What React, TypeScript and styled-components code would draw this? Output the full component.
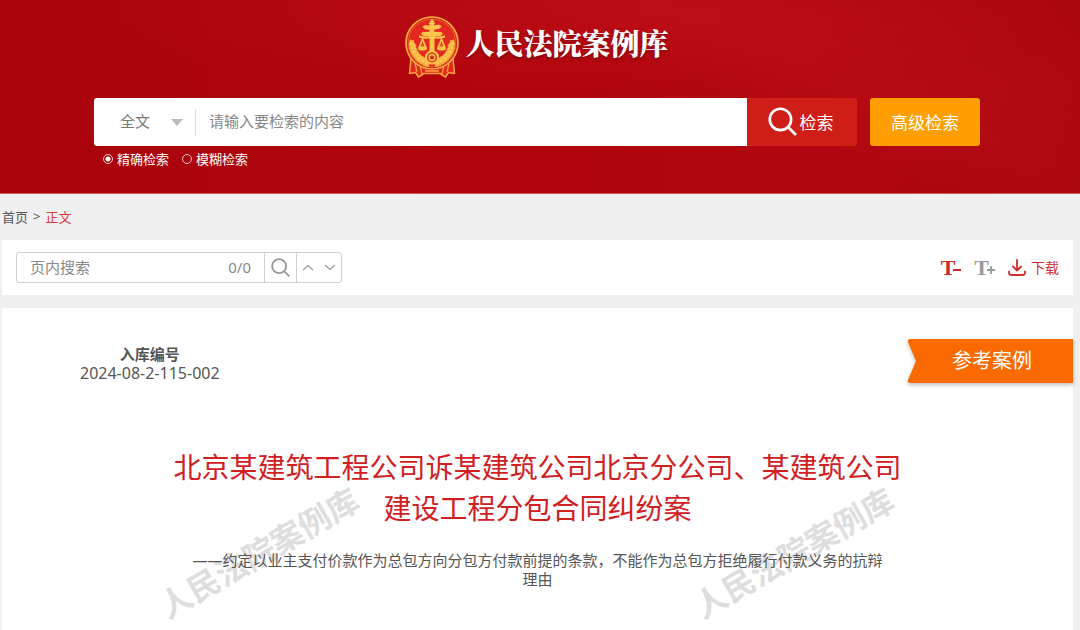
import React, { useState } from "react";
import styled, { createGlobalStyle } from "styled-components";

const sans = `"Noto Sans", "Noto Sans CJK SC", sans-serif`;

const GlobalStyle = createGlobalStyle`
  * { box-sizing: border-box; }
  body {
    margin: 0;
    background: #f0f0f0;
    font-family: ${sans};
    color: #555;
  }
  button, input, select { font-family: inherit; margin: 0; }
  h1, h2, p, dl, dd { margin: 0; font-weight: 400; }
`;

const Page = styled.div`
  min-height: 100vh;
  display: flex;
  flex-direction: column;
`;

const Header = styled.header`
  display: flex;
  flex-direction: column;
  align-items: center;
  height: 194px;
  padding: 16px 6px 0 0;
  border-bottom: 1px solid #d0575c;
  background:
    linear-gradient(24deg, transparent 62%, rgba(255, 60, 60, 0.05) 72%, transparent 90%),
    radial-gradient(ellipse 46% 40% at 54% 6%, rgba(200, 22, 32, 0.4), transparent),
    radial-gradient(ellipse 36% 60% at 90% 40%, rgba(195, 20, 30, 0.25), transparent),
    linear-gradient(90deg, #a9040c, #b1040d 40%, #b1060f 75%, #a8050d);
`;

const Brand = styled.a`
  display: flex;
  align-items: center;
  gap: 6px;
  height: 62px;
  color: #fff;
  text-decoration: none;
`;

const BrandName = styled.span`
  padding-bottom: 8px;
  font: 900 29px/40px "Noto Serif CJK SC", "Noto Sans CJK SC", serif;
  text-shadow: 0 2px 3px rgba(80, 0, 0, 0.5);
`;

const SearchForm = styled.form`
  width: 82.5%;
  margin-top: 20px;
`;

const SearchRow = styled.div`
  display: flex;
  height: 48px;
`;

const SearchBox = styled.div`
  flex: 1;
  min-width: 0;
  display: flex;
  align-items: center;
  background: #fff;
  border-radius: 3px 0 0 3px;
`;

const ScopeField = styled.div`
  display: flex;
  align-items: center;
  width: 102px;
  height: 27px;
  border-right: 1px solid #ddd;
`;

const ScopeSelect = styled.select`
  appearance: none;
  width: 90px;
  height: 27px;
  padding: 0 0 2px 26px;
  border: 0;
  outline: 0;
  color: #777;
  font-size: 15px;
  background: none;
`;

const ScopeArrow = styled.svg`
  flex: none;
  margin-left: -13px;
  pointer-events: none;
`;

const SearchInput = styled.input`
  flex: 1;
  min-width: 0;
  height: 40px;
  padding: 0 13px 2px;
  border: 0;
  outline: 0;
  background: none;
  color: #555;
  font-size: 15px;
  &::placeholder { color: #888; opacity: 1; }
`;

const ActionButton = styled.button<{ $tone: "red" | "orange" }>`
  display: flex;
  align-items: center;
  justify-content: center;
  gap: 3px;
  width: 110px;
  padding: 0 3px 2px 0;
  border: 0;
  color: #fff;
  font-size: 17px;
  cursor: pointer;
  background: ${(p) => (p.$tone === "red" ? "#cf1d17" : "#ff9e00")};
  border-radius: ${(p) => (p.$tone === "red" ? "0 3px 3px 0" : "3px")};
`;

const AdvancedButton = styled(ActionButton)`
  margin-left: 13px;
  padding-right: 0;
`;

const Modes = styled.div`
  display: flex;
  gap: 13px;
  padding: 4px 0 0 9px;
`;

const ModeLabel = styled.label`
  display: flex;
  align-items: center;
  gap: 4px;
  color: #fff;
  font-size: 13px;
  line-height: 18px;
`;

const ModeRadio = styled.input`
  appearance: none;
  width: 10px;
  height: 10px;
  border: 1px solid #f3c9cb;
  border-radius: 50%;
  &:checked { background: radial-gradient(circle, #fff 2px, transparent 3px); }
`;

const Breadcrumb = styled.nav`
  display: flex;
  align-items: center;
  gap: 5px;
  height: 46px;
  padding: 0 0 2px 2px;
  font-size: 13px;
`;

const Crumb = styled.a<{ $current?: boolean }>`
  color: ${(p) => (p.$current ? "#d83a3a" : "#555")};
  text-decoration: none;
`;

const Toolbar = styled.section`
  display: flex;
  align-items: center;
  justify-content: space-between;
  height: 55px;
  margin: 0 7px 13px 2px;
  padding: 0 14px;
  background: #fff;
`;

const FindBox = styled.div`
  display: flex;
  width: 326px;
  height: 31px;
  border: 1px solid #d0d0d0;
  border-radius: 3px;
`;

const FindInput = styled.input`
  flex: 1;
  min-width: 0;
  padding: 0 13px 2px;
  border: 0;
  outline: 0;
  background: none;
  color: #555;
  font-size: 15px;
  &::placeholder { color: #888; opacity: 1; }
`;

const FindCount = styled.span`
  padding-right: 13px;
  color: #888;
  font-size: 15px;
  line-height: 29px;
`;

const FindButton = styled.button`
  display: flex;
  align-items: center;
  justify-content: center;
  width: 32px;
  padding: 0;
  border: 0;
  border-left: 1px solid #d0d0d0;
  background: none;
  cursor: pointer;
`;

const StepGroup = styled.div`
  display: flex;
  width: 45px;
  border-left: 1px solid #d0d0d0;
`;

const StepButton = styled.button`
  flex: 1;
  display: flex;
  align-items: center;
  justify-content: center;
  padding: 0;
  border: 0;
  background: none;
  cursor: pointer;
`;

const Tools = styled.div`
  display: flex;
  align-items: center;
  gap: 13px;
`;

const SizeButton = styled.button<{ $active?: boolean }>`
  display: flex;
  align-items: center;
  padding: 0;
  border: 0;
  background: none;
  color: ${(p) => (p.$active ? "#cc2a2a" : "#999")};
  font: bold 22px/24px "Liberation Serif", serif;
  cursor: pointer;
`;

const SizeSign = styled.svg`
  margin: 5px 0 0 -2px;
`;

const Download = styled.a`
  display: flex;
  align-items: center;
  gap: 5px;
  color: #cc3030;
  font-size: 14px;
  line-height: 24px;
  text-decoration: none;
`;

const Article = styled.main`
  position: relative;
  flex: 1;
  margin: 0 7px 0 2px;
  padding: 31px 0 40px;
  background: #fff;
`;

const Watermarks = styled.div`
  position: absolute;
  inset: 0;
  display: flex;
  overflow: hidden;
  pointer-events: none;
`;

const Watermark = styled.span`
  flex: 1;
  padding: 221px 22px 0 0;
  text-align: center;
  white-space: nowrap;
  color: #dedede;
  font-weight: 700;
  font-size: 32px;
  line-height: 48px;
  span { display: inline-block; transform: rotate(-30deg); }
`;

const Content = styled.div`
  position: relative;
`;

const Meta = styled.div`
  display: flex;
  justify-content: space-between;
  align-items: flex-start;
`;

const CaseNumber = styled.dl`
  margin: 6px 0 0 78px;
  text-align: center;
  font-size: 15px;
  line-height: 19px;
  dt { font-weight: 700; }
  dd { font-size: 16px; }
`;

const Ribbon = styled.div`
  position: relative;
  width: 166px;
  height: 44px;
  padding-left: 4px;
  color: #fff;
  font-size: 20px;
  line-height: 44px;
  text-align: center;
  svg {
    position: absolute;
    inset: 0;
    overflow: visible;
    filter: drop-shadow(0 2px 2px rgba(0, 0, 0, 0.25));
  }
  span { position: relative; }
`;

const Title = styled.h1`
  margin-top: 64px;
  text-align: center;
  color: #d0201f;
  font-size: 28px;
  line-height: 41px;
`;

const TitleLine = styled.span`
  display: block;
`;

const Subtitle = styled.p`
  max-width: 700px;
  margin: 22px auto 0;
  text-align: center;
  font-size: 15px;
  line-height: 19px;
`;

const Magnifier = ({ size, color, width }: { size: number; color: string; width: number }) => (
  <svg width={size} height={size} viewBox="0 0 28 28" fill="none" stroke={color} strokeWidth={width}>
    <circle cx="12" cy="12" r="10.3" />
    <path d="M19.3 19.3L27 27" />
  </svg>
);

const ears = [0, 1, 2, 3, 4, 5, 6];

const Emblem = () => (
  <svg width="54" height="62" viewBox="0 0 54 62" aria-hidden="true">
    <path d="M6 42L4.500 57.500l6-1 3 4.500 5.500-3.500h16l5.500 3.500 3-4.500 6 1L48 42z" fill="#e5281f" stroke="#f4a33c" strokeWidth="1.5" strokeLinejoin="round" />
    <path d="M10 47l2 9M15 50l2 8M44 47l-2 9M39 50l-2 8M20 55h14" stroke="#f7a040" strokeWidth="1.3" fill="none" />
    <circle cx="27" cy="27" r="26" fill="#dc251c" stroke="#f9ad3e" strokeWidth="1.700" />
    <circle cx="27" cy="27" r="23.800" fill="#e3291f" stroke="#ee7d31" strokeWidth="0.600" />
    <path d="M7 24C4 36 13 46 24 49M47 24C50 36 41 46 30 49" fill="none" stroke="#fbb83e" strokeWidth="4.500" />
    <g fill="#fdc54a" stroke="#ea8a30" strokeWidth="0.400">
      {ears.map((i) => {
        const turn = 174 - i * 12;
        const a = (turn * Math.PI) / 180;
        const x = 27 + 19.5 * Math.cos(a);
        const y = 27 + 19.5 * Math.sin(a);
        return (
          <g key={i}>
            <ellipse cx={x} cy={y} rx="4.200" ry="2.700" transform={`rotate(${turn + 55} ${x} ${y})`} />
            <ellipse cx={54 - x} cy={y} rx="4.200" ry="2.700" transform={`rotate(${-turn - 55} ${54 - x} ${y})`} />
          </g>
        );
      })}
    </g>
    <g fill="#fdc54a">
      <path d="M27 2.500l3 4.500-1.200 2.500 5-1 3 1.700-2.600 2.600-5 1v2l7 .2 1.800 2-2.600 2H29.500V37h-5V20h-5.900l-2.800-2 2-2 6.700-.2v-2l-4.500-.6-2.600-2.500 3-1.600 4.300.7-.7-2.800z" />
      <path d="M14 19.300q6.500 2.300 13 .3 6.500 2 13-.3v2.200q-6.500 2.200-13 .3-6.500 1.900-13-.3z" />
      <path d="M17.500 21l4.500 11q.3 2.600-4.500 2.600T13 32zM36.500 21l4.500 11q.3 2.600-4.500 2.600T32 32z" />
    </g>
    <path d="M17.500 25l-2 5.500h4zM36.500 25l-2 5.500h4z" fill="#e8501f" />
    <circle cx="27" cy="41.500" r="7.200" fill="#fdc04a" />
    <circle cx="27" cy="41.500" r="5" fill="#dd2a1d" />
    <circle cx="27" cy="41.500" r="3.700" fill="#fdc04a" />
    <circle cx="27" cy="41.500" r="2.100" fill="#dd2a1d" />
  </svg>
);

export default function App() {
  const [mode, setMode] = useState("exact");
  return (
    <>
      <GlobalStyle />
      <Page>
        <Header>
          <Brand href="#">
            <Emblem />
            <BrandName>人民法院案例库</BrandName>
          </Brand>
          <SearchForm onSubmit={(e) => e.preventDefault()}>
            <SearchRow>
              <SearchBox>
                <ScopeField>
                  <ScopeSelect aria-label="检索范围">
                    <option>全文</option>
                  </ScopeSelect>
                  <ScopeArrow width="12" height="7" viewBox="0 0 12 7">
                    <path d="M0 0h12L6 7z" fill="#bbb" />
                  </ScopeArrow>
                </ScopeField>
                <SearchInput type="text" placeholder="请输入要检索的内容" aria-label="检索内容" />
              </SearchBox>
              <ActionButton type="submit" $tone="red">
                <Magnifier size={29} color="#fff" width={2.6} />
                检索
              </ActionButton>
              <AdvancedButton type="button" $tone="orange">高级检索</AdvancedButton>
            </SearchRow>
            <Modes>
              <ModeLabel>
                <ModeRadio type="radio" name="mode" checked={mode === "exact"} onChange={() => setMode("exact")} />
                精确检索
              </ModeLabel>
              <ModeLabel>
                <ModeRadio type="radio" name="mode" checked={mode === "fuzzy"} onChange={() => setMode("fuzzy")} />
                模糊检索
              </ModeLabel>
            </Modes>
          </SearchForm>
        </Header>

        <Breadcrumb>
          <Crumb href="#">首页</Crumb>
          <span>&gt;</span>
          <Crumb href="#" $current>正文</Crumb>
        </Breadcrumb>

        <Toolbar>
          <FindBox>
            <FindInput type="text" placeholder="页内搜索" aria-label="页内搜索" />
            <FindCount>0/0</FindCount>
            <FindButton type="button" aria-label="搜索">
              <Magnifier size={19} color="#999" width={2.8} />
            </FindButton>
            <StepGroup>
              <StepButton type="button" aria-label="上一个">
                <svg width="12" height="7" viewBox="0 0 12 7" fill="none" stroke="#999" strokeWidth="1.2">
                  <path d="M1 6l5-4.500L11 6" />
                </svg>
              </StepButton>
              <StepButton type="button" aria-label="下一个">
                <svg width="12" height="7" viewBox="0 0 12 7" fill="none" stroke="#999" strokeWidth="1.2">
                  <path d="M1 1l5 4.500L11 1" />
                </svg>
              </StepButton>
            </StepGroup>
          </FindBox>
          <Tools>
            <SizeButton type="button" $active aria-label="缩小字号">
              T
              <SizeSign width="8" height="8" viewBox="0 0 8 8" stroke="currentColor" strokeWidth="2">
                <path d="M0 4h8" />
              </SizeSign>
            </SizeButton>
            <SizeButton type="button" aria-label="放大字号">
              T
              <SizeSign width="8" height="8" viewBox="0 0 8 8" stroke="currentColor" strokeWidth="1.800">
                <path d="M0 4h8M4 0v8" />
              </SizeSign>
            </SizeButton>
            <Download href="#">
              <svg width="18" height="17" viewBox="0 0 18 17" fill="none" stroke="currentColor" strokeWidth="1.800" strokeLinecap="round" strokeLinejoin="round">
                <path d="M9 1v10M5 7.500l4 4 4-4M1 12.500v1q0 2.500 2.500 2.500h11q2.500 0 2.500-2.500v-1" />
              </svg>
              下载
            </Download>
          </Tools>
        </Toolbar>

        <Article>
          <Watermarks aria-hidden="true">
            <Watermark><span>人民法院案例库</span></Watermark>
            <Watermark><span>人民法院案例库</span></Watermark>
          </Watermarks>
          <Content>
            <Meta>
              <CaseNumber>
                <dt>入库编号</dt>
                <dd>2024-08-2-115-002</dd>
              </CaseNumber>
              <Ribbon>
                <svg width="166" height="44" viewBox="0 0 166 44" aria-hidden="true">
                  <path d="M3 0H166V44H3Q0 44 1 41L9 22 1 3Q0 0 3 0z" fill="#fb6a00" />
                </svg>
                <span>参考案例</span>
              </Ribbon>
            </Meta>
            <Title>
              <TitleLine>北京某建筑工程公司诉某建筑公司北京分公司、某建筑公司</TitleLine>
              <TitleLine>建设工程分包合同纠纷案</TitleLine>
            </Title>
            <Subtitle>——约定以业主支付价款作为总包方向分包方付款前提的条款，不能作为总包方拒绝履行付款义务的抗辩理由</Subtitle>
          </Content>
        </Article>
      </Page>
    </>
  );
}
